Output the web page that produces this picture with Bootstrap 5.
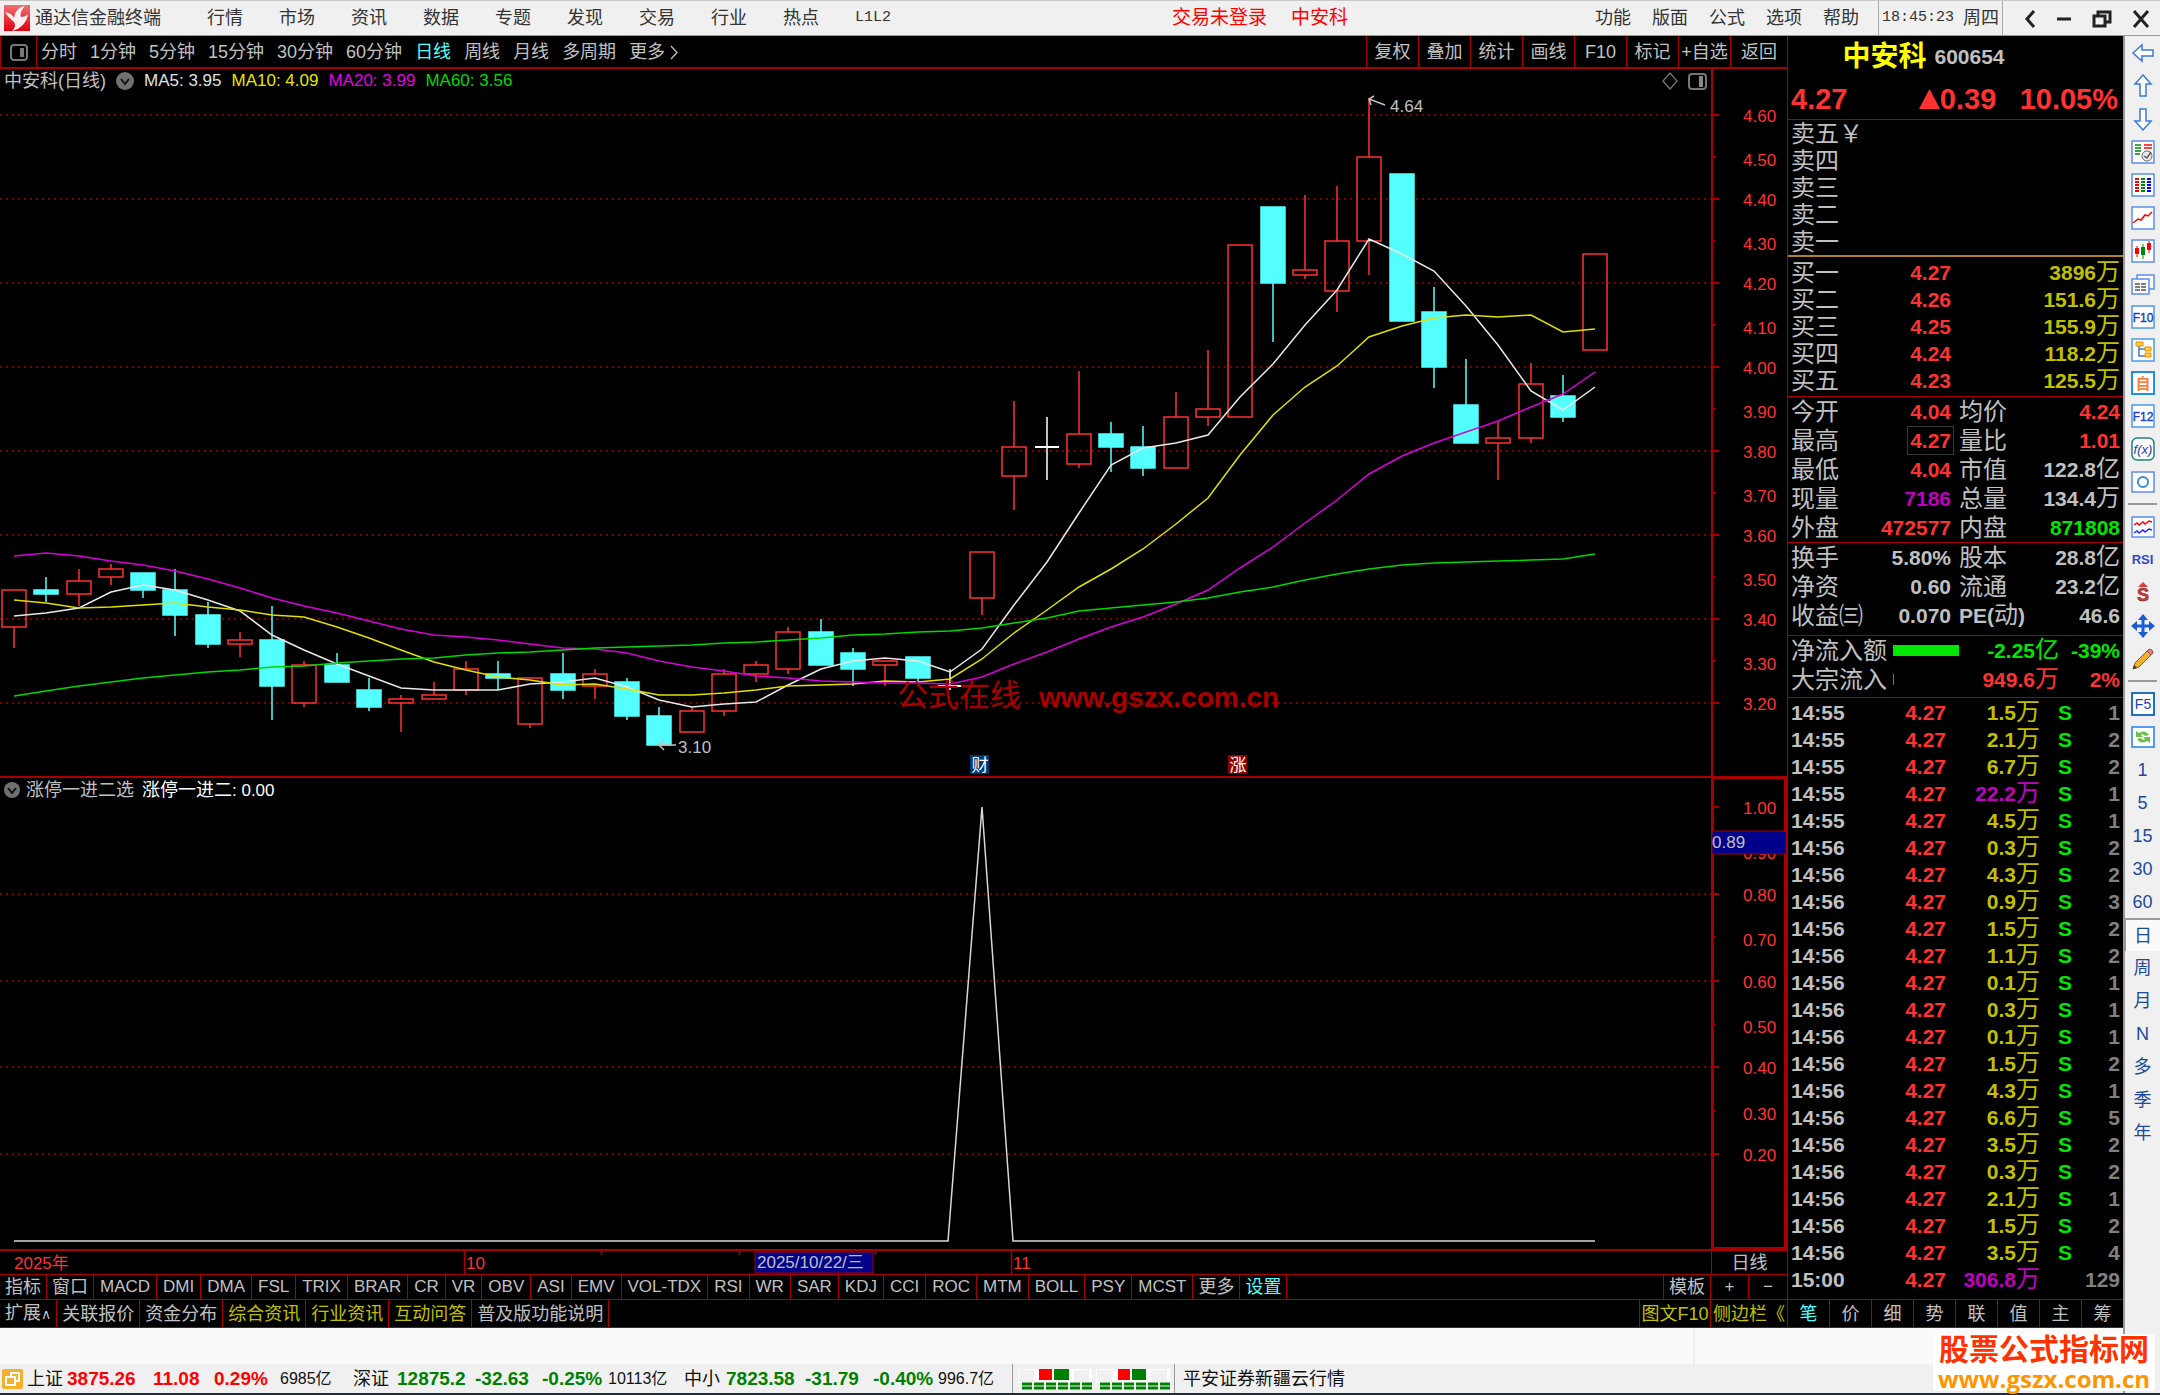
<!DOCTYPE html>
<html lang="zh-CN">
<head>
<meta charset="utf-8">
<meta name="viewport" content="width=device-width, initial-scale=1">
<title>通达信金融终端</title>
<link href="https://cdn.jsdelivr.net/npm/bootstrap@5.3.0/dist/css/bootstrap.min.css" rel="stylesheet">
<style>
:root{--line:#a80000;--up:#ff3232;--grey:#c0c0c0;--gold:#c0c000;--down:#00e600;--cyan:#54ffff}
body{font-family:"Liberation Sans","Noto Sans CJK SC",sans-serif;font-size:18px;line-height:24px;background:#f0f0f0;color:#333;min-height:100vh}
button,.plain-link{background:none;border:0;padding:0;color:inherit;font:inherit;line-height:inherit;text-decoration:none;white-space:nowrap}
.mono{font-family:"Liberation Mono","Noto Sans CJK SC",monospace;font-size:15px}
/* menu bar */
.menubar{height:36px;border-top:1px solid #c8c8c8;border-bottom:1px solid #999;padding-left:4px}
.menubar .brand{margin:0 46px 0 5px}
.menu-left{gap:36px}
.menu-right{gap:21px}
.alert-red{color:#f00;font-size:19px;padding-left:34px}
.clock{border-left:1px solid #aaa;border-right:1px solid #aaa;padding:0 3px;margin-left:19px;gap:9px;height:34px}
.win-keys{width:157px;padding:0 10px 0 20px}
/* dark workspace */
.dark{background:#000;color:var(--grey)}
.toolbar{height:33px;border-bottom:2px solid var(--line)}
.layout-key{width:37px;height:31px;border-left:1px solid var(--line);border-right:1px solid var(--line)}
.periods{gap:13px;padding-left:4px}
.tool-keys button{width:52px;height:31px;border-left:1px solid var(--line)}
.tool-keys button:last-child{width:57px}
.on{color:var(--cyan)!important}
.pane-head{height:24px;font-size:17px}
.pane-head.second{height:26px;border-top:2px solid var(--line)}
.pane-head .cjk{font-size:18px}
.legend{gap:10px}
.axis-cell{width:76px;border-left:2px solid var(--line);flex:none}
.second .axis-cell{border:3px solid var(--line);border-top-width:1px;border-bottom:0}
.plot{display:block;width:100%;height:auto;overflow:visible}
.date-row{height:25px;border-top:2px solid var(--line)}
.date-row svg{height:23px;display:block}
.axis-name{width:76px;border-left:1px solid var(--line);flex:none}
.key-row{height:25px;border-top:1px solid var(--line);font-size:17px}
.key-row button{padding:0 6px;border-right:1px solid var(--line)}
.key-row .zh{font-size:18px;padding:0 5px}
.key-row.tall{height:29px;border-bottom:1px solid var(--line)}
.key-row.tall .zh{padding:0 5px}
.key-row .lined{border-left:1px solid var(--line)}
.key-row .half{width:38px;padding:0}
.caret-up{font-family:"DejaVu Sans",sans-serif;font-size:14px}
.yellow{color:var(--gold)}
/* quote panel */
.quote{width:336px;flex:none;border-left:1px solid var(--line)}
.stock-line{height:42px;font-size:21px;padding-right:64px}
.stock-name{font-size:28px;font-weight:700;color:#ff0}
.stock-code{font-weight:700}
.last-line{height:42px;font-size:29px;font-weight:700;color:var(--up);padding:0 5px 0 3px;border-bottom:1px solid var(--line)}
.grid-table{width:100%;table-layout:fixed;border-collapse:collapse;font-size:24px;line-height:27px}
.grid-table td,.grid-table th{padding:0;height:27px;font-weight:400;vertical-align:middle;white-space:nowrap}
.grid-table.loose{line-height:29px}
.grid-table.loose td,.grid-table.loose th{height:29px}
.grid-table .n{font-size:21px;font-weight:700;text-align:right}
.unit{font-size:24px;font-weight:400;line-height:0}
.sec{padding:0 3px;border-bottom:1px solid var(--line)}
.sec.offers{border-bottom:2px solid #b08030}
.sec.bids{padding-top:2px;padding-bottom:2px}
.sec.fund{padding-bottom:5px}
.sec.flow{padding-bottom:3px}
.sec.ticks{border-bottom:0;padding-top:1px}
.up{color:var(--up)}.vol{color:var(--gold)}.down{color:var(--down)}.big{color:#c000c0}.dim{color:#808080}
.boxed{outline:1px solid #383838;outline-offset:2px;line-height:20px}
.flow-bar{height:11px;background:var(--down)}
.flow-bar.in{background:var(--up)}
.tabs{height:29px;border-top:1px solid var(--line);border-bottom:1px solid var(--line)}
.tabs button{border-right:1px solid var(--line)}
.tabs button:last-child{border-right:0}
/* lower strips */
.blank-strip{height:36px;background:#fafafa}
.blank-strip .right-part{width:430px;border-left:2px solid #eee}
.statusbar{height:29px;color:#111;padding-left:2px}
.idx{display:grid;grid-template-columns:40px 86px 61px 66px 73px 44px 78px 67px 66px 76px 42px 79px 68px 65px 74px;margin-left:4px;font-size:18px}
.idx b{font-size:19px}.idx span{white-space:nowrap}
.idx .amt{font-size:16px}
.idx .r{color:#f00}.idx .g{color:#008000}
.gauge{border-left:1px solid #999;border-right:1px solid #999;width:163px;height:29px}
.sidebar{width:37px;flex:none;border-left:2px solid #999;color:#1a4a9c}
.sidebar button{height:33px;width:100%;display:flex;align-items:center;justify-content:center}
.sidebar hr{margin:5px 3px;height:2px;border:0;background:#999;opacity:1}
.sidebar .pressed{background:#fafafa;border-top:2px solid #999;border-left:1px solid #999}
.bottom-edge{height:2px;background:#1c2c3c}
.site-mark{position:absolute;right:5px;bottom:4px;width:222px;background:#fff;text-align:center;z-index:2}
.site-mark strong{display:block;font-size:30px;line-height:32px;color:#f30;white-space:nowrap}
.site-mark a{display:block;font:700 24px/25px "Open Sans","Noto Sans",sans-serif;color:#ff9600;text-decoration:none}
</style>
</head>
<body class="position-relative d-flex flex-column">
<header class="menubar d-flex align-items-center">
  <svg width="26" height="26" viewBox="0 0 26 26" aria-hidden="true"><defs><linearGradient id="lg" x2="0" y2="1"><stop stop-color="#f07070"/><stop offset="1" stop-color="#e00010"/></linearGradient></defs><rect width="26" height="26" fill="url(#lg)"/><path d="M1 7c5 1 8 3 9 6 1-6 4-11 11-12-4 4-5 8-4 11 3 0 5-1 7-3-1 8-7 15-16 17 3-3 4-6 2-9C7 14 3 11 1 7z" fill="#fff" opacity=".92"/></svg>
  <span class="brand">通达信金融终端</span>
  <nav class="menu-left d-flex align-items-center" aria-label="主菜单">
    <a class="plain-link" href="#">行情</a><a class="plain-link" href="#">市场</a><a class="plain-link" href="#">资讯</a><a class="plain-link" href="#">数据</a><a class="plain-link" href="#">专题</a><a class="plain-link" href="#">发现</a><a class="plain-link" href="#">交易</a><a class="plain-link" href="#">行业</a><a class="plain-link" href="#">热点</a><a class="plain-link mono" href="#">L1L2</a>
  </nav>
  <div class="mx-auto d-flex gap-4 alert-red"><span>交易未登录</span><span>中安科</span></div>
  <nav class="menu-right d-flex" aria-label="工具菜单">
    <a class="plain-link" href="#">功能</a><a class="plain-link" href="#">版面</a><a class="plain-link" href="#">公式</a><a class="plain-link" href="#">选项</a><a class="plain-link" href="#">帮助</a>
  </nav>
  <div class="clock d-flex align-items-center"><span class="mono">18:45:23</span><span>周四</span></div>
  <div class="win-keys d-flex align-items-center justify-content-between">
    <button aria-label="后退"><svg width="14" height="18" viewBox="0 0 14 18"><path d="M11 1L4 9l7 8" fill="none" stroke="#222" stroke-width="3"/></svg></button>
    <button aria-label="最小化"><svg width="14" height="18" viewBox="0 0 14 18"><path d="M0 9h14" stroke="#222" stroke-width="3"/></svg></button>
    <button aria-label="还原"><svg width="20" height="18" viewBox="0 0 20 18"><path d="M2 6h11v10H2zM6 6V2h12v10h-5" fill="none" stroke="#222" stroke-width="3"/></svg></button>
    <button aria-label="关闭"><svg width="18" height="18" viewBox="0 0 18 18"><path d="M2 1l14 16M16 1L2 17" stroke="#222" stroke-width="3"/></svg></button>
  </div>
</header>

<div class="d-flex flex-grow-1">
<div class="flex-grow-1 d-flex flex-column">
  <div class="dark d-flex">
    <main class="flex-grow-1 d-flex flex-column">
      <div class="toolbar d-flex align-items-center">
        <button class="layout-key" aria-label="布局"><svg width="18" height="17" viewBox="0 0 18 17"><rect x="1" y="1" width="16" height="15" rx="3" fill="none" stroke="#777" stroke-width="2"/><path d="M10 4h4v9h-4z" fill="#777"/></svg></button>
        <div class="periods d-flex flex-grow-1">
          <button>分时</button><button>1分钟</button><button>5分钟</button><button>15分钟</button><button>30分钟</button><button>60分钟</button><button class="on">日线</button><button>周线</button><button>月线</button><button>多周期</button><button>更多 <svg width="9" height="15" viewBox="0 0 9 15"><path d="M1 1l6 6.500-6 6.500" fill="none" stroke="#c0c0c0" stroke-width="1.300"/></svg></button>
        </div>
        <div class="tool-keys d-flex"><button>复权</button><button>叠加</button><button>统计</button><button>画线</button><button>F10</button><button>标记</button><button>+自选</button><button>返回</button></div>
      </div>
      <div class="pane-head d-flex">
        <div class="legend d-flex flex-grow-1 align-items-center ps-1">
          <span class="cjk">中安科(日线)</span>
          <svg width="18" height="18" viewBox="0 0 18 18"><circle cx="9" cy="9" r="9" fill="#707070"/><path d="M5 7l4 5 4-5" fill="none" stroke="#111" stroke-width="2"/></svg>
          <span style="color:#e0e0e0">MA5: 3.95</span><span style="color:#e6e600">MA10: 4.09</span><span style="color:#e600e6">MA20: 3.99</span><span style="color:#00d800">MA60: 3.56</span>
          <svg class="ms-auto" width="16" height="18" viewBox="0 0 16 18"><path d="M8 1l7 8-7 8-7-8z" fill="none" stroke="#777" stroke-width="1.300"/></svg>
          <svg class="me-1" width="19" height="17" viewBox="0 0 19 17"><rect x="1" y="1" width="17" height="15" rx="3" fill="none" stroke="#777" stroke-width="2"/><path d="M11 3h4v11h-4z" fill="#888"/></svg>
        </div>
        <div class="axis-cell"></div>
      </div>
      <svg class="plot" id="kline" viewBox="0 0 1787 683" role="img" aria-label="日K线图"></svg>
      <div class="pane-head second d-flex">
        <div class="d-flex flex-grow-1 align-items-center gap-1 ps-1">
          <svg width="18" height="18" viewBox="0 0 18 18"><circle cx="8" cy="9" r="8" fill="#707070"/><path d="M4 7l4 5 4-5" fill="none" stroke="#111" stroke-width="2"/></svg>
          <span class="cjk">涨停一进二选</span><span class="text-white ms-1"><span class="cjk">涨停一进二</span>: 0.00</span>
        </div>
        <div class="axis-cell"></div>
      </div>
      <svg class="plot" id="signal" viewBox="0 0 1787 447" role="img" aria-label="涨停一进二指标"></svg>
      <div class="date-row d-flex">
        <svg class="flex-grow-1" viewBox="0 0 1711 23" preserveAspectRatio="xMinYMid meet" font-size="17" fill="#ff3232">
          <path d="M464.500 0v23M1011.500 0v23M601.500 0v4M739.500 0v4M875.500 0v4" stroke="#a80000" stroke-width="1.500"/>
          <text x="14" y="18">2025年</text><text x="466" y="18">10</text><text x="1013" y="18">11</text>
          <rect x="755" y="1" width="118" height="21" fill="#00008b" stroke="#a80000"/><text x="757" y="17" fill="#c0c0c0">2025/10/22/三</text>
        </svg>
        <div class="axis-name text-center">日线</div>
      </div>
      <div class="key-row d-flex">
        <button class="zh">指标</button><button class="zh">窗口</button><button>MACD</button><button>DMI</button><button>DMA</button><button>FSL</button><button>TRIX</button><button>BRAR</button><button>CR</button><button>VR</button><button>OBV</button><button>ASI</button><button>EMV</button><button>VOL-TDX</button><button>RSI</button><button>WR</button><button>SAR</button><button>KDJ</button><button>CCI</button><button>ROC</button><button>MTM</button><button>BOLL</button><button>PSY</button><button>MCST</button><button class="zh">更多</button><button class="zh on">设置</button>
        <button class="zh ms-auto lined">模板</button><button class="half">+</button><button class="half border-end-0">−</button>
      </div>
      <div class="key-row tall d-flex">
        <button class="zh">扩展<span class="caret-up">∧</span></button><button class="zh">关联报价</button><button class="zh">资金分布</button><button class="zh yellow">综合资讯</button><button class="zh yellow">行业资讯</button><button class="zh yellow">互动问答</button><button class="zh">普及版功能说明</button>
        <button class="zh yellow ms-auto lined px-0" style="width:72px">图文F10</button><button class="zh yellow border-end-0 px-0" style="width:76px">侧边栏《</button>
      </div>
    </main>

    <aside class="quote d-flex flex-column">
      <div class="stock-line d-flex align-items-center justify-content-center gap-2"><span class="stock-name">中安科</span><span class="stock-code">600654</span></div>
      <div class="last-line d-flex align-items-center justify-content-between"><span>4.27</span><span class="d-flex align-items-center ms-5"><svg width="21" height="20" viewBox="0 0 21 20"><path d="M10.500 0L21 20H0z" fill="#ff3232"/></svg>0.39</span><span>10.05%</span></div>
      <div class="sec offers"><table class="grid-table"><tbody><tr><th scope="row">卖五￥</th></tr><tr><th scope="row">卖四</th></tr><tr><th scope="row">卖三</th></tr><tr><th scope="row">卖二</th></tr><tr><th scope="row">卖一</th></tr></tbody></table></div>
      <div class="sec bids"><table class="grid-table"><colgroup><col style="width:60px"><col style="width:100px"><col></colgroup><tbody>
        <tr><th scope="row">买一</th><td class="n up">4.27</td><td class="n vol">3896<span class="unit">万</span></td></tr>
        <tr><th scope="row">买二</th><td class="n up">4.26</td><td class="n vol">151.6<span class="unit">万</span></td></tr>
        <tr><th scope="row">买三</th><td class="n up">4.25</td><td class="n vol">155.9<span class="unit">万</span></td></tr>
        <tr><th scope="row">买四</th><td class="n up">4.24</td><td class="n vol">118.2<span class="unit">万</span></td></tr>
        <tr><th scope="row">买五</th><td class="n up">4.23</td><td class="n vol">125.5<span class="unit">万</span></td></tr></tbody></table></div>
      <div class="sec"><table class="grid-table loose"><colgroup><col style="width:72px"><col style="width:88px"><col style="width:8px"><col style="width:62px"><col></colgroup><tbody>
        <tr><th scope="row">今开</th><td class="n up">4.04</td><td></td><th scope="row">均价</th><td class="n up">4.24</td></tr>
        <tr><th scope="row">最高</th><td class="n up"><span class="boxed">4.27</span></td><td></td><th scope="row">量比</th><td class="n up">1.01</td></tr>
        <tr><th scope="row">最低</th><td class="n up">4.04</td><td></td><th scope="row">市值</th><td class="n">122.8<span class="unit">亿</span></td></tr>
        <tr><th scope="row">现量</th><td class="n big">7186</td><td></td><th scope="row">总量</th><td class="n">134.4<span class="unit">万</span></td></tr>
        <tr><th scope="row">外盘</th><td class="n up">472577</td><td></td><th scope="row">内盘</th><td class="n down">871808</td></tr></tbody></table></div>
      <div class="sec fund"><table class="grid-table loose"><colgroup><col style="width:72px"><col style="width:88px"><col style="width:8px"><col style="width:62px"><col></colgroup><tbody>
        <tr><th scope="row">换手</th><td class="n">5.80%</td><td></td><th scope="row">股本</th><td class="n">28.8<span class="unit">亿</span></td></tr>
        <tr><th scope="row">净资</th><td class="n">0.60</td><td></td><th scope="row">流通</th><td class="n">23.2<span class="unit">亿</span></td></tr>
        <tr><th scope="row">收益㈢</th><td class="n">0.070</td><td></td><th scope="row" class="n text-start">PE(<span class="unit">动</span>)</th><td class="n">46.6</td></tr></tbody></table></div>
      <div class="sec flow"><table class="grid-table loose"><colgroup><col style="width:102px"><col style="width:66px"><col><col style="width:61px"></colgroup><tbody>
        <tr><th scope="row">净流入额</th><td><div class="flow-bar" style="width:100%"></div></td><td class="n down">-2.25<span class="unit">亿</span></td><td class="n down">-39%</td></tr>
        <tr><th scope="row">大宗流入</th><td><div class="flow-bar in" style="width:2%"></div></td><td class="n up">949.6<span class="unit">万</span></td><td class="n up">2%</td></tr></tbody></table></div>
      <div class="sec ticks"><table class="grid-table"><colgroup><col style="width:75px"><col style="width:80px"><col style="width:94px"><col style="width:32px"><col></colgroup><tbody id="ticks"></tbody></table></div>
      <div class="tabs d-flex mt-auto"><button class="flex-fill on">笔</button><button class="flex-fill">价</button><button class="flex-fill">细</button><button class="flex-fill">势</button><button class="flex-fill">联</button><button class="flex-fill">值</button><button class="flex-fill">主</button><button class="flex-fill">筹</button></div>
    </aside>
  </div>
  <div class="blank-strip d-flex justify-content-end"><div class="right-part"></div></div>
  <footer class="statusbar d-flex align-items-center">
    <svg width="21" height="20" viewBox="0 0 21 20" aria-hidden="true"><rect width="21" height="20" rx="2" fill="#f5b02c"/><path d="M9 8V4h8v8h-4M4 8h9v8H4z" fill="none" stroke="#fff" stroke-width="2"/></svg>
    <div class="idx align-items-center">
      <span>上证</span><b class="r">3875.26</b><b class="r">11.08</b><b class="r">0.29%</b><span class="amt">6985亿</span>
      <span>深证</span><b class="g">12875.2</b><b class="g">-32.63</b><b class="g">-0.25%</b><span class="amt">10113亿</span>
      <span>中小</span><b class="g">7823.58</b><b class="g">-31.79</b><b class="g">-0.40%</b><span class="amt">996.7亿</span>
    </div>
    <div class="gauge d-flex align-items-center justify-content-center">
      <svg width="152" height="22" viewBox="0 0 152 22" aria-hidden="true"><g><path d="M0 1h74v14H0z" fill="#fff"/><path d="M1 2h15v12H1zM56 2h15v12H56z" fill="#f0f0f0"/><path d="M21 1h13v11H21z" fill="#f00"/><path d="M36 1h15v11H36z" fill="#008000"/><path d="M4 16h70M4 20h70" stroke="#008000" stroke-width="3" stroke-dasharray="10 2"/></g><g transform="translate(78)"><path d="M0 1h74v14H0z" fill="#fff"/><path d="M1 2h15v12H1zM56 2h15v12H56z" fill="#f0f0f0"/><path d="M22 1h12v11H22z" fill="#f00"/><path d="M36 1h14v11H36z" fill="#008000"/><path d="M4 16h70M4 20h70" stroke="#008000" stroke-width="3" stroke-dasharray="10 2"/></g></svg>
    </div>
    <span class="ms-2">平安证券新疆云行情</span>
  </footer>
</div>

<nav class="sidebar" aria-label="侧边工具">
  <button aria-label="左移"><svg width="24" height="24" viewBox="0 0 24 24"><path d="M2 12l9-8v5h11v6H11v5z" fill="#fff" stroke="#3c78d8" stroke-width="1.500"/></svg></button>
  <button aria-label="上移"><svg width="24" height="24" viewBox="0 0 24 24"><path d="M12 1l8 9h-5v12H9V10H4z" fill="#fff" stroke="#3c78d8" stroke-width="1.500"/></svg></button>
  <button aria-label="下移"><svg width="24" height="24" viewBox="0 0 24 24"><path d="M12 23l8-9h-5V2H9v12H4z" fill="#fff" stroke="#3c78d8" stroke-width="1.500"/></svg></button>
  <button aria-label="选股"><svg width="24" height="24" viewBox="0 0 24 24"><rect x="1" y="1" width="22" height="22" fill="#fff" stroke="#5a8ee6" stroke-width="1.500"/><path d="M4 5h6M4 8h6M4 11h6M4 14h5" stroke="#080" stroke-width="1.500"/><path d="M13 5h8M13 8h8" stroke="#f00" stroke-width="1.500"/><circle cx="16" cy="16" r="5" fill="#eee" stroke="#666"/><path d="M13 16l3 2 4-6" fill="none" stroke="#555" stroke-width="1.500"/></svg></button>
  <button aria-label="报价"><svg width="24" height="24" viewBox="0 0 24 24"><rect x="1" y="1" width="22" height="22" fill="#fff" stroke="#5a8ee6" stroke-width="1.500"/><g stroke-width="4" stroke-dasharray="2 1"><path d="M6 5v14" stroke="#f00"/><path d="M12 5v14" stroke="#080"/><path d="M18 5v14" stroke="#00f"/></g></svg></button>
  <button aria-label="分时图"><svg width="24" height="24" viewBox="0 0 24 24"><rect x="1" y="1" width="22" height="22" fill="#fff" stroke="#5a8ee6" stroke-width="1.500"/><path d="M2 17l5-4 3 1 4-5 3 1 4-4" fill="none" stroke="#f00" stroke-width="1.500"/></svg></button>
  <button aria-label="K线图"><svg width="24" height="24" viewBox="0 0 24 24"><rect x="1" y="1" width="22" height="22" fill="#fff" stroke="#5a8ee6" stroke-width="1.500"/><path d="M6 7v11M18 2v12" stroke="#f00"/><path d="M4 9h4v6H4zM16 4h4v7h-4z" fill="#f00"/><path d="M12 5v15" stroke="#080"/><path d="M10 8h4v8h-4z" fill="#080"/></svg></button>
  <button aria-label="多窗"><svg width="24" height="24" viewBox="0 0 24 24"><rect x="6" y="3" width="17" height="14" fill="#fff" stroke="#5a8ee6" stroke-width="1.500"/><rect x="1" y="7" width="17" height="15" fill="#fff" stroke="#5a8ee6" stroke-width="1.500"/><path d="M4 12h12M4 15h12M4 18h12" stroke="#555" stroke-width="1.500" stroke-dasharray="5 1"/></svg></button>
  <button aria-label="基本资料"><svg width="24" height="24" viewBox="0 0 24 24"><rect x="1" y="1" width="22" height="22" fill="#fff" stroke="#4a9ae6" stroke-width="1.500"/><text x="12" y="17" text-anchor="middle" font-size="12" fill="#2040c0" stroke="#2040c0" stroke-width=".400">F10</text></svg></button>
  <button aria-label="板块树"><svg width="24" height="24" viewBox="0 0 24 24"><rect x="1" y="1" width="22" height="22" fill="#fff" stroke="#4a9ae6" stroke-width="1.500"/><path d="M8 7v11h6M8 11h6" fill="none" stroke="#3c78d8" stroke-width="1.500"/><path d="M5 4h7v4H5zM14 9h6v4h-6zM14 15h6v4h-6z" fill="#ffd040" stroke="#e09000"/></svg></button>
  <button aria-label="自选股"><svg width="24" height="24" viewBox="0 0 24 24"><rect x="1" y="1" width="22" height="22" fill="#fff" stroke="#1e90e6" stroke-width="2"/><text x="12" y="18" text-anchor="middle" font-size="15" font-weight="700" fill="#ff7f3f">自</text></svg></button>
  <button aria-label="F12"><svg width="24" height="24" viewBox="0 0 24 24"><rect x="1" y="1" width="22" height="22" fill="#fff" stroke="#4a9ae6" stroke-width="1.500"/><text x="12" y="17" text-anchor="middle" font-size="12" fill="#2040c0" stroke="#2040c0" stroke-width=".400">F12</text></svg></button>
  <button aria-label="公式"><svg width="24" height="24" viewBox="0 0 24 24"><rect x="1" y="1" width="22" height="22" rx="5" fill="#fff" stroke="#208080" stroke-width="1.500"/><text x="12" y="17" text-anchor="middle" font-size="13" font-style="italic" fill="#2040c0">f(x)</text></svg></button>
  <button aria-label="圈选"><svg width="24" height="24" viewBox="0 0 24 24"><rect x="1" y="2" width="22" height="20" fill="#fff" stroke="#5a8ee6" stroke-width="1.500"/><circle cx="12" cy="12" r="5" fill="none" stroke="#3c8ad8" stroke-width="2"/></svg></button>
  <hr>
  <button aria-label="指标叠加"><svg width="24" height="24" viewBox="0 0 24 24"><rect x="1" y="2" width="22" height="20" fill="#fff" stroke="#5a8ee6" stroke-width="1.500"/><path d="M3 10l3-2 2 2 4-3 2 2 4-3 3 1" fill="none" stroke="#f00" stroke-width="1.500"/><path d="M3 18l3-2 2 2 4-3 2 2 4-3 3 1" fill="none" stroke="#22f" stroke-width="1.500"/></svg></button>
  <button style="font-size:13px;font-weight:700;color:#3048d0">RSI</button>
  <button aria-label="资金"><svg width="24" height="24" viewBox="0 0 24 24"><path d="M7 6l5-5 5 5z" fill="#d04040"/><text x="12" y="20" text-anchor="middle" font-size="18" font-weight="700" fill="#d03838" stroke="#803030" stroke-width=".600">S</text></svg></button>
  <button aria-label="移动"><svg width="24" height="24" viewBox="0 0 24 24"><path d="M12 0l5 6H7zM12 24l5-6H7zM0 12l6-5v10zM24 12l-6-5v10z" fill="#1c5cd0"/><path d="M12 6v12M6 12h12" stroke="#1c5cd0" stroke-width="3"/></svg></button>
  <button aria-label="画线"><svg width="24" height="24" viewBox="0 0 24 24"><path d="M2 22l2-6L16 4l4 4L8 20z" fill="#f0b030" stroke="#906020"/><path d="M16 4l2-2q4 0 4 4l-2 2z" fill="#e88080" stroke="#a05050"/><path d="M2 22l1-4 3 3z" fill="#333"/></svg></button>
  <hr>
  <button aria-label="F5"><svg width="24" height="24" viewBox="0 0 24 24"><rect x="1" y="1" width="22" height="22" fill="#fff" stroke="#2070c8" stroke-width="2"/><text x="12" y="17" text-anchor="middle" font-size="14" fill="#2040c0">F5</text></svg></button>
  <button aria-label="刷新"><svg width="24" height="24" viewBox="0 0 24 24"><rect x="1" y="2" width="22" height="20" fill="#fff" stroke="#5a9af0" stroke-width="2"/><path d="M5 12V6l3 2q6-4 10 2l-4 1q-2-3-4-1l2 2zM19 12v6l-3-2q-6 4-10-2l4-1q2 3 4 1l-2-2z" fill="#6cc04a"/></svg></button>
  <button>1</button><button>5</button><button>15</button><button>30</button><button>60</button><button class="pressed">日</button><button>周</button><button>月</button><button>N</button><button>多</button><button>季</button><button>年</button>
</nav>
</div>
<div class="bottom-edge"></div>
<div class="site-mark"><strong>股票公式指标网</strong><a href="#">www.gszx.com.cn</a></div>

<script src="https://cdn.jsdelivr.net/npm/bootstrap@5.3.0/dist/js/bootstrap.bundle.min.js"></script>
<script>
// open, high, low, close for each trading day
const days = [
[3.38,3.47,3.33,3.47],[3.47,3.50,3.44,3.46],[3.46,3.52,3.43,3.49],[3.50,3.53,3.48,3.52],[3.51,3.51,3.45,3.47],
[3.47,3.52,3.36,3.41],[3.41,3.44,3.33,3.34],[3.34,3.37,3.31,3.35],[3.35,3.43,3.16,3.24],[3.20,3.30,3.19,3.29],
[3.29,3.32,3.25,3.25],[3.23,3.26,3.18,3.19],[3.20,3.22,3.13,3.21],[3.21,3.25,3.21,3.22],[3.23,3.30,3.22,3.28],
[3.27,3.30,3.23,3.26],[3.15,3.26,3.14,3.26],[3.27,3.32,3.21,3.23],[3.24,3.28,3.21,3.27],[3.25,3.26,3.16,3.17],
[3.17,3.19,3.10,3.10],[3.13,3.19,3.13,3.18],[3.18,3.28,3.17,3.27],[3.27,3.30,3.25,3.29],[3.28,3.38,3.27,3.37],
[3.37,3.40,3.29,3.29],[3.32,3.33,3.24,3.28],[3.29,3.30,3.24,3.30],[3.31,3.31,3.24,3.26],[3.24,3.28,3.23,3.24],
[3.45,3.56,3.41,3.56],[3.74,3.92,3.66,3.81],[3.81,3.88,3.73,3.81],[3.77,3.99,3.76,3.84],[3.84,3.87,3.75,3.81],
[3.81,3.86,3.74,3.76],[3.76,3.94,3.76,3.88],[3.88,4.04,3.86,3.90],[3.88,4.29,3.88,4.29],[4.38,4.38,4.06,4.20],
[4.22,4.41,4.21,4.23],[4.18,4.43,4.13,4.30],[4.30,4.64,4.22,4.50],[4.46,4.46,4.11,4.11],[4.13,4.19,3.95,4.00],
[3.91,4.02,3.82,3.82],[3.82,3.87,3.73,3.83],[3.83,4.01,3.82,3.96],[3.93,3.98,3.87,3.88],[4.04,4.27,4.04,4.27]];
// averages that reach back before the first day drawn
const early = {
 5:[3.406,3.414,3.427,3.464],
 10:[3.446,3.439,3.426,3.428,3.434,3.439,3.429,3.422,3.41],
 20:[3.55,3.557,3.551,3.539,3.529,3.514,3.496,3.474,3.449,3.432,3.414,3.396,3.376,3.361,3.356,3.35,3.341,3.332,3.329]};
const ma60 = [3.217,3.229,3.24,3.249,3.26,3.267,3.274,3.278,3.285,3.289,3.296,3.3,3.304,3.308,3.314,3.318,3.322,3.326,3.33,3.333,3.335,3.339,3.342,3.346,3.35,3.355,3.361,3.364,3.368,3.372,3.379,3.39,3.403,3.42,3.427,3.433,3.441,3.45,3.464,3.476,3.492,3.507,3.52,3.528,3.533,3.535,3.538,3.541,3.543,3.554];
const X = i => Math.round(14 + i * 32.27);
const Y = p => Math.round(22 + (4.6 - p) * 420);
const average = n => days.map((d, i) => i < n - 1 ? early[n][i] : days.slice(i - n + 1, i + 1).reduce((s, k) => s + k[3], 0) / n);
const path = (v, c) => `<polyline points="${v.map((p, i) => X(i) + ',' + Y(p)).join(' ')}" fill="none" stroke="${c}" stroke-width="1.5"/>`;

let k = '';
for (let c = 460; c >= 320; c -= 10) {
  const p = c / 100, y = Y(p), even = c % 20 === 0;
  if (even) k += `<path d="M0 ${y}H1711" stroke="#780000" stroke-width="2" stroke-dasharray="2 4"/>`;
  k += `<path d="M1711 ${y}h${even ? 8 : 4}" stroke="#a80000" stroke-width="2"/><text x="1743" y="${y + (even ? 7 : 9)}" fill="#ff3232">${p.toFixed(2)}</text>`;
}
k += '<path d="M1712 0V683" stroke="#a80000" stroke-width="2"/>';
days.forEach(([o, h, l, c], i) => {
  const x = X(i), top = Y(Math.max(o, c)), bot = Y(Math.min(o, c));
  const col = o === c ? '#fff' : c > o ? '#ff3232' : '#54ffff';
  k += `<path d="M${x} ${Y(h)}V${top}M${x} ${bot}V${Y(l)}" stroke="${col}" stroke-width="1.5"/>`;
  if (o === c) k += `<path d="M${x - 12} ${top}h24" stroke="#fff" stroke-width="2"/>`;
  else k += `<rect x="${x - 12}" y="${top}" width="24" height="${bot - top}" fill="${c > o ? 'none' : col}" stroke="${col}" stroke-width="1.5"/>`;
});
k += path(average(5), '#e8e8e8') + path(average(10), '#e0e000') + path(average(20), '#d800d8') + path(ma60, '#00d800');
k += `<g fill="none" stroke="#c0c0c0" stroke-width="1.5"><path d="M1385 12L1369 6M1374 3l-5 3 2 6"/><path d="M676 652H660M664 647l-5 5 5 5"/></g>
<g fill="#c0c0c0"><text x="1390" y="19">4.64</text><text x="678" y="660">3.10</text></g>
<g fill="#a80000"><text x="897" y="613" font-size="31">公式在线</text><text x="1039" y="614" font-size="28" font-weight="700">www.gszx.com.cn</text></g>
<rect x="970" y="662" width="19" height="19" fill="#003a75"/><rect x="1228" y="662" width="19" height="19" fill="#900000"/>
<g fill="#fff" text-anchor="middle" font-size="17"><text x="980" y="678">财</text><text x="1238" y="678">涨</text></g>`;
document.getElementById('kline').innerHTML = `<g font-size="17">${k}</g>`;

let s = '';
for (let n = 10; n >= 2; n--) {
  const even = n % 2 === 0, y = Math.round(5 + (10 - n) * 43.4);
  if (even && n < 10) s += `<path d="M0 ${y}H1711" stroke="#780000" stroke-width="2" stroke-dasharray="2 4"/>`;
  s += `<path d="M1711 ${y}h${even ? 8 : 4}" stroke="#a80000" stroke-width="2"/><text x="1743" y="${y + (even ? 7 : 9)}" fill="#ff3232">${(n / 10).toFixed(2)}</text>`;
}
s += `<path d="M1712.500 0V447M1785.500 0V447" stroke="#a80000" stroke-width="3"/><path d="M1711 446h76" stroke="#a80000" stroke-width="2"/>
<rect x="1712" y="29" width="74" height="23" fill="#00008b" stroke="#a80000"/><text x="1712" y="46" fill="#c0c0c0">0.89</text>
<polyline points="14,439 948,439 982,5 1013,439 1595,439" fill="none" stroke="#d8d8d8" stroke-width="1.5"/>`;
document.getElementById('signal').innerHTML = `<g font-size="17">${s}</g>`;

const ticks = [['14:55','1.5',1],['14:55','2.1',2],['14:55','6.7',2],['14:55','22.2',1],['14:55','4.5',1],['14:56','0.3',2],['14:56','4.3',2],['14:56','0.9',3],['14:56','1.5',2],['14:56','1.1',2],['14:56','0.1',1],['14:56','0.3',1],['14:56','0.1',1],['14:56','1.5',2],['14:56','4.3',1],['14:56','6.6',5],['14:56','3.5',2],['14:56','0.3',2],['14:56','2.1',1],['14:56','1.5',2],['14:56','3.5',4],['15:00','306.8',129]];
document.getElementById('ticks').innerHTML = ticks.map(([t, v, n]) =>
  `<tr><td class="n text-start">${t}</td><td class="n up">4.27</td><td class="n ${v > 20 ? 'big' : 'vol'}">${v}<span class="unit">万</span></td><td class="n down">${t === '15:00' ? '' : 'S'}</td><td class="n dim">${n}</td></tr>`).join('');
</script>
</body>
</html>
